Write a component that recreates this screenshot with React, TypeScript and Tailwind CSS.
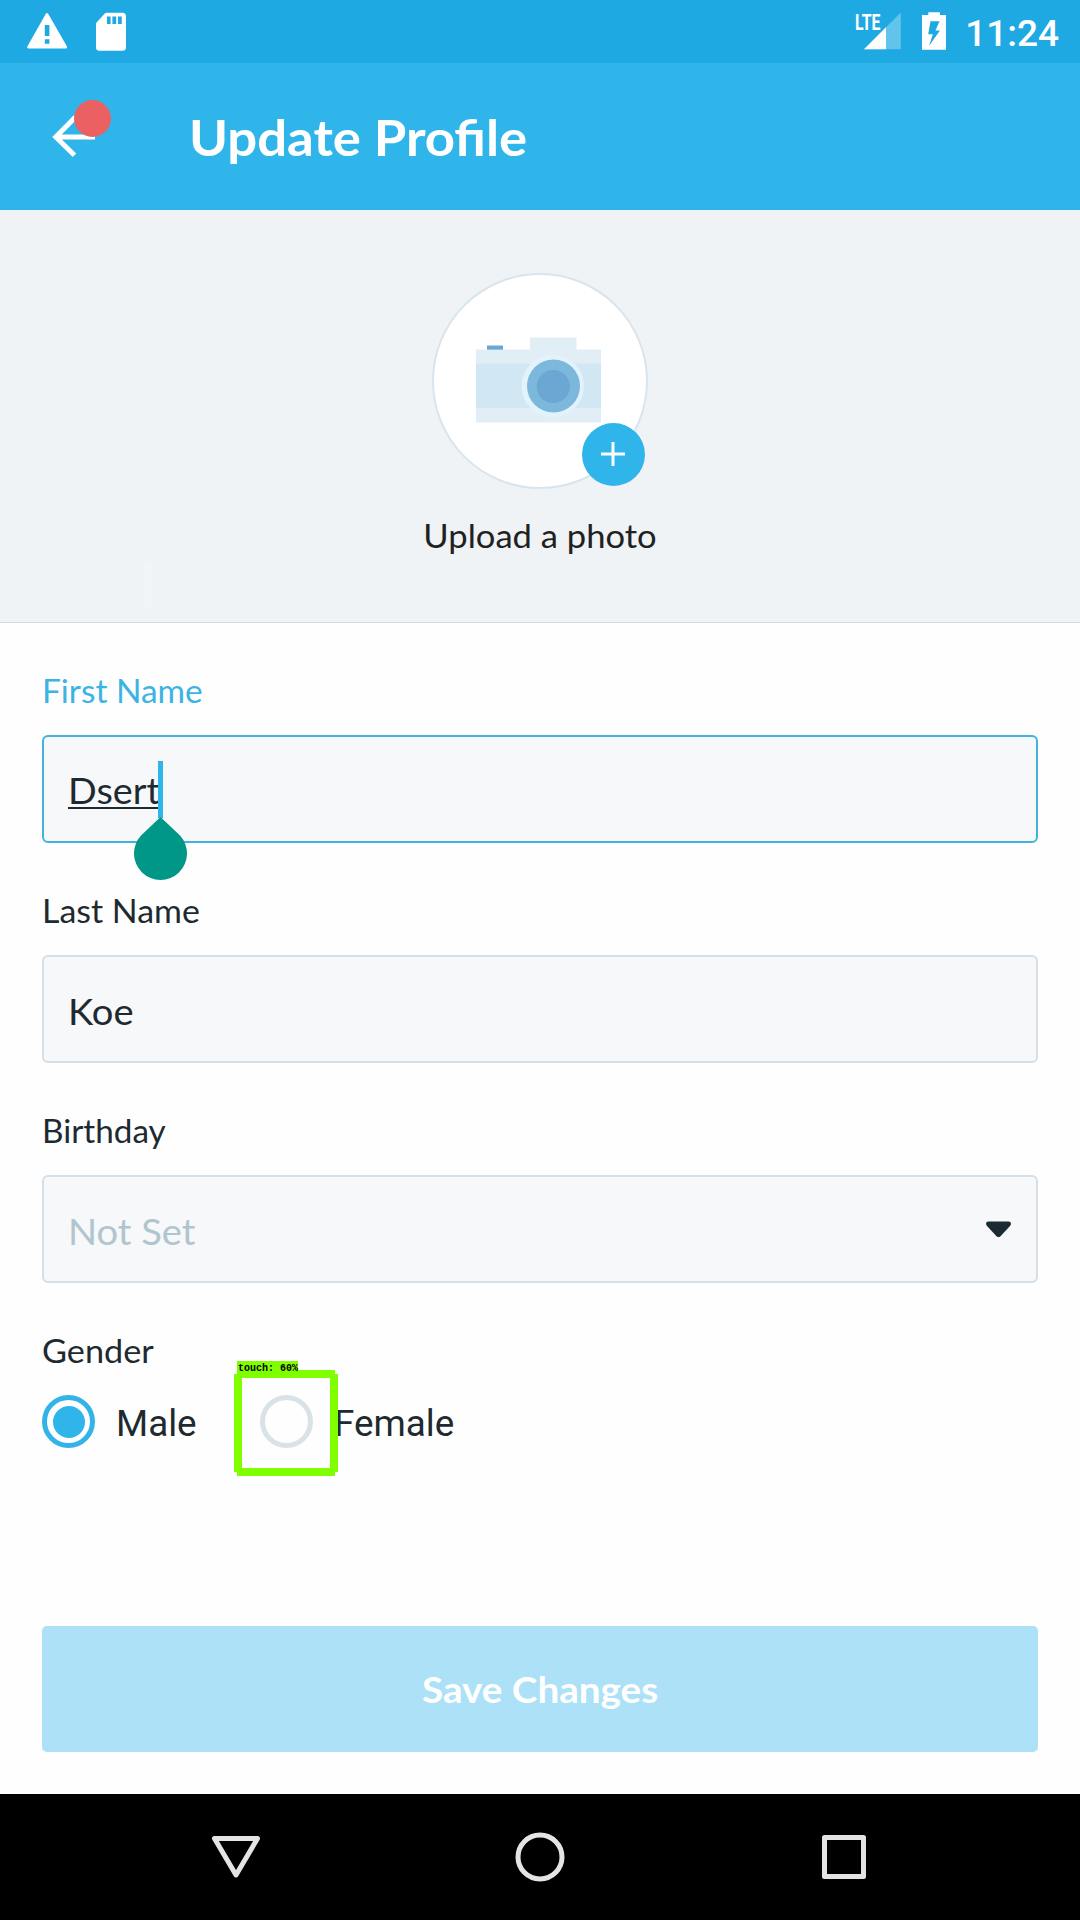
import type { ReactNode } from "react";

function StatusBar() {
  return (
    <div className="flex h-[63px] items-start justify-between bg-[#1fa9e3] text-white">
      <div className="flex pl-[26px]">
        <svg width="42" height="63" viewBox="0 0 42 63" fill="currentColor">
          <path
            fillRule="evenodd"
            d="M20 13.600q1-1.200 2 0L41 46.500q.8 2-1 2H2.300q-1.800 0-1-2zM18.800 25v11h4.600V25zM18.800 39.200v4.600h4.600v-4.600z"
          />
        </svg>
        <svg className="ml-[26px]" width="34" height="63" viewBox="0 0 34 63" fill="currentColor">
          <path
            fillRule="evenodd"
            d="M12 12.700h16.500q3.500 0 3.500 3.500v31q0 3.500-3.500 3.500h-23q-3.500 0-3.500-3.500V24q0-1 .8-1.800l8-8.600q.7-.9 2-.9zM13 16.400v7.600h3.600v-7.600zM18.400 16.400v7.600h3.800v-7.600zM24 16.400v7.600h3.800v-7.600z"
          />
        </svg>
      </div>
      <div className="flex items-start pr-[21px]">
        <div className="relative h-[63px] w-[48px]">
          <svg className="absolute top-0 -left-px" width="48" height="63" viewBox="0 0 48 63">
            <path d="M10 49.200 46.800 12.500V49.200z" fill="#fff" fillOpacity=".3" />
            <path d="M10 49.200 32 27.200V49.200z" fill="#fff" />
          </svg>
          <span className="absolute top-[10px] left-0 origin-left scale-x-[.72] font-[Roboto] text-[22px] leading-[25px] font-bold">
            LTE
          </span>
        </div>
        <svg className="ml-[19px]" width="24" height="63" viewBox="0 0 24 63" fill="currentColor">
          <path
            fillRule="evenodd"
            d="M6.300 12.300h11.600v2.600H24v34.800H0V14.900h6.300zM8.500 21.200l-2.300 13h4.600l-3.700 11.500L18 30.400h-4.500l4-9.200z"
          />
        </svg>
        <span className="ml-[19px] font-[Roboto] text-[37px] leading-[67px] font-medium">11:24</span>
      </div>
    </div>
  );
}

function Header() {
  return (
    <header className="flex h-[147px] items-center bg-[#30b5eb] text-white">
      <div className="relative ml-[50px] h-[50px] w-[62px]">
        <svg className="absolute top-0 left-0" width="62" height="50" viewBox="50 112 62 50">
          <path d="M95 137H56.500M75.500 117 55.800 137l18.700 18.200" fill="none" stroke="#fff" strokeWidth="5" />
        </svg>
        <span className="absolute -top-[12px] left-[24px] size-[37px] rounded-full bg-[#eb6060]" />
      </div>
      <h1 className="ml-[77px] origin-left scale-x-[1.064] text-[49.500px] leading-[60px] font-bold">
        Update Profile
      </h1>
    </header>
  );
}

function CameraIcon() {
  return (
    <svg width="126" height="86" viewBox="476 337 126 86">
      <path d="M476 349.500h54v-12h46.500v12H601v73H476z" fill="#e1eef5" />
      <path d="M476 363.500h125V408H476z" fill="#d1e8f4" />
      <path d="M487 345.500h16v4.200h-16z" fill="#69a7d5" />
      <circle cx="552.700" cy="386" r="31.200" fill="#e3f3fb" />
      <circle cx="553.500" cy="386" r="26.500" fill="#7cb7dc" />
      <circle cx="553.300" cy="386.500" r="16.600" fill="#6ca7d4" />
    </svg>
  );
}

function PhotoPicker() {
  return (
    <section className="relative flex h-[413px] flex-col items-center border-b border-[#c9dee8] bg-[#eff3f6] pt-[63px]">
      <div className="relative flex size-[216px] items-center justify-center rounded-full border-2 border-[#dae4ec] bg-white">
        <div className="-mt-[2px] -ml-[2px]">
          <CameraIcon />
        </div>
        <button className="absolute top-[147.500px] left-[147.500px] flex size-[63px] items-center justify-center rounded-full bg-[#30b5eb]">
          <svg width="24" height="24" viewBox="0 0 24 24" stroke="#fff" strokeWidth="3">
            <path d="M12 0v24M0 12h24" />
          </svg>
        </button>
      </div>
      <p className="mt-[25px] scale-x-[1.080] text-[32px] leading-[44px] text-[#212121]">Upload a photo</p>
      <span className="absolute top-[351px] left-[144px] h-[48px] w-[8px] rounded-sm bg-[#f1f5f8]" />
    </section>
  );
}

type FieldProps = {
  label: string;
  labelClass: string;
  boxClass: string;
  children: ReactNode;
};

function Field({ label, labelClass, boxClass, children }: FieldProps) {
  return (
    <div className="mb-[45px]">
      <div className={`mb-[22px] origin-left pt-px text-[32px] leading-[44px] ${labelClass}`}>{label}</div>
      <div
        className={`flex h-[108px] items-center rounded-[6px] border-2 bg-[#f6f8fa] pr-[24px] pl-[24px] text-[36.500px] leading-[48px] ${boxClass}`}
      >
        {children}
      </div>
    </div>
  );
}

function Form() {
  return (
    <main className="flex flex-1 flex-col bg-[#fefefe] px-[42px] pt-[45px] text-[#1e2a30]">
      <Field label="First Name" labelClass="scale-x-[1.045] text-[#3cb4e3]" boxClass="border-[#41b3dc]">
        <span className="relative mt-[2px]">
          <span className="inline-block origin-left scale-x-[1.035]">Dsert</span>
          <span className="absolute top-[41px] left-0 h-[2px] w-[91px] bg-[#1e2a30]" />
          <span className="absolute -top-[5px] left-[90px] h-[57px] w-[5px] bg-[#30b5eb]" />
          <svg className="absolute top-[51px] left-[66px]" width="53" height="63" viewBox="0 0 53 63">
            <path d="M26.500 0 46 18.500A26.500 26.500 0 1 1 7 18.500z" fill="#009688" />
          </svg>
        </span>
      </Field>
      <Field label="Last Name" labelClass="scale-x-[1.060]" boxClass="border-[#d5dfe7]">
        <span className="mt-[3px] origin-left scale-x-[1.045]">Koe</span>
      </Field>
      <Field label="Birthday" labelClass="scale-x-[1.040]" boxClass="justify-between border-[#d5dfe7]">
        <span className="mt-[3px] origin-left scale-x-[1.045] text-[#b1c5ce]">Not Set</span>
        <svg width="27" height="17" viewBox="0 0 27 17">
          <path
            d="M3.500.5h20q2.500 0 2.500 2.300 0 1-1 2.200L15.500 15.200q-2 1.800-4 0L2 5Q1 3.800 1 2.800 1 .5 3.500.5z"
            fill="#1b2b34"
          />
        </svg>
      </Field>
      <div className="origin-left scale-x-[1.070] pt-px text-[32px] leading-[44px]">Gender</div>
      <div className="relative mt-[22px] flex h-[53px] items-center font-[Roboto] text-[36.800px] leading-[53px]">
        <span className="flex size-[53px] items-center justify-center rounded-full border-[5px] border-[#32b4e8]">
          <span className="size-[32px] rounded-full bg-[#30b5eb]" />
        </span>
        <span className="ml-[21px] w-[144px] pt-[4px]">Male</span>
        <span className="size-[53px] rounded-full border-[5px] border-[#d9e2e7]" />
        <span className="ml-[21px] pt-[4px]">Female</span>
        <svg className="absolute -top-[25px] left-[192px]" width="104" height="106" viewBox="0 0 104 106">
          <path
            fillRule="evenodd"
            d="M3 0h98v4h3v98h-3v4H3v-4H0V4h3zM8 8v90h88V8z"
            fill="#80ff00"
          />
        </svg>
        <span className="absolute -top-[34px] left-[195px] h-[11px] w-[61px] bg-[#80ff00] pl-px font-['Liberation_Mono'] text-[10px] leading-[15px] font-bold whitespace-pre text-black">
          touch: 60%
        </span>
      </div>
      <button className="mt-auto mb-[42px] h-[126px] shrink-0 rounded-[5px] bg-[#ade1f7] text-[36px] leading-[48px] font-bold text-white">
        <span className="inline-block scale-x-[1.073]">Save Changes</span>
      </button>
    </main>
  );
}

function NavBar() {
  return (
    <nav className="flex h-[126px] items-center justify-between bg-black px-[209px]">
      <svg width="54" height="54" viewBox="0 0 54 54" fill="none" stroke="#e4e4e4" strokeWidth="5" strokeLinejoin="round">
        <path d="M5.500 8.500h43L27 45z" />
      </svg>
      <svg width="54" height="54" viewBox="0 0 54 54" fill="none" stroke="#e4e4e4" strokeWidth="5">
        <circle cx="27" cy="27" r="22" />
      </svg>
      <svg width="54" height="54" viewBox="0 0 54 54" fill="none" stroke="#e4e4e4" strokeWidth="5" strokeLinejoin="round">
        <path d="M7.500 7.500h39v39h-39z" />
      </svg>
    </nav>
  );
}

export default function App() {
  return (
    <div className="flex h-[1920px] w-[1080px] flex-col overflow-hidden font-[Lato,sans-serif]">
      <StatusBar />
      <Header />
      <PhotoPicker />
      <Form />
      <NavBar />
    </div>
  );
}
